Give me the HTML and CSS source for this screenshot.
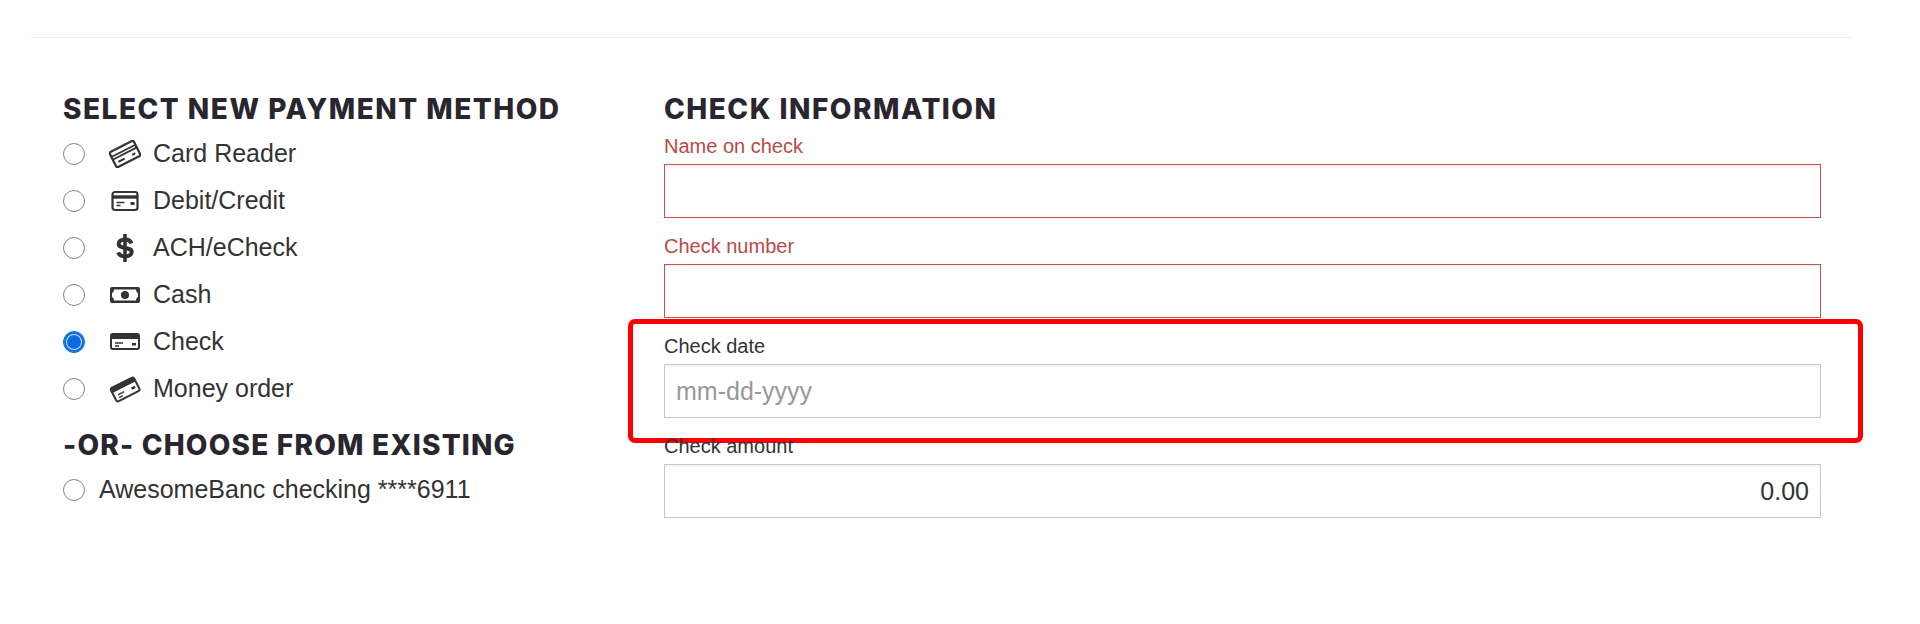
FILE: index.html
```html
<!DOCTYPE html>
<html lang="en">
<head>
  <meta charset="UTF-8">
  <meta name="viewport" content="width=device-width, initial-scale=1.0">
  <title>Payment method</title>
  <link rel="stylesheet" href="styles.css">
</head>
<body>
  <hr class="divider">
  <div class="payment">
    <div class="methods">
      <h2>Select new payment method</h2>
      <label class="method">
        <input type="radio" name="method">
        <svg class="icon" viewBox="0 0 32 28"><g transform="rotate(-27 16 14)" fill="none" stroke="#333" stroke-width="2.200"><rect x="2.500" y="5.500" width="27" height="17" rx="2"/><path d="M3 10.500h26M3 13.500h26" stroke-width="1.800"/><path d="M6.500 18h7M22 18h3.500" stroke-width="2"/></g></svg>
        <span>Card Reader</span>
      </label>
      <label class="method">
        <input type="radio" name="method">
        <svg class="icon" viewBox="0 0 32 28"><rect x="3.500" y="5" width="25" height="18" rx="2.500" fill="none" stroke="#333" stroke-width="2.200"/><path d="M4 10h24" stroke="#333" stroke-width="3.400"/><path d="M7.500 15.500h8M7.500 18.500h4" stroke="#333" stroke-width="1.600"/><path d="M21.500 15h4v3h-4z" fill="#333"/></svg>
        <span>Debit/Credit</span>
      </label>
      <label class="method">
        <input type="radio" name="method">
        <svg class="icon" viewBox="0 0 32 28"><path d="M22.500 9.500c-.8-2.400-3.300-4-6.500-4-3.800 0-6.300 1.800-6.300 4.400 0 5.600 13 2.600 13 8 0 2.700-2.800 4.400-6.700 4.400-3.400 0-5.900-1.400-6.800-4" fill="none" stroke="#333" stroke-width="4"/><path d="M16 0v28" stroke="#333" stroke-width="3.600"/></svg>
        <span>ACH/eCheck</span>
      </label>
      <label class="method">
        <input type="radio" name="method">
        <svg class="icon" viewBox="0 0 32 28"><rect x="1" y="6" width="30" height="16" rx="2" fill="#333"/><path d="M5 8.500h22q0 3 2 3.500v4q-2 .5-2 3.500H5q0-3-2-3.500v-4q2-.5 2-3.500z" fill="#fff"/><circle cx="16" cy="14" r="4" fill="#333"/></svg>
        <span>Cash</span>
      </label>
      <label class="method">
        <input type="radio" name="method" checked>
        <svg class="icon" viewBox="0 0 32 28"><rect x="2" y="6" width="28" height="15" rx="2" fill="none" stroke="#333" stroke-width="2"/><rect x="2" y="6" width="28" height="5" fill="#333"/><path d="M6 15h8M6 18h4" stroke="#333" stroke-width="1.400"/><path d="M23 15h4v2.500h-4z" fill="#333"/></svg>
        <span>Check</span>
      </label>
      <label class="method">
        <input type="radio" name="method">
        <svg class="icon" viewBox="0 0 32 28"><g transform="rotate(-27 16 14)"><rect x="3" y="7" width="26" height="15" rx="2" fill="none" stroke="#333" stroke-width="2"/><rect x="3" y="7" width="26" height="5" fill="#333"/><path d="M7 16h7M7 19h4" stroke="#333" stroke-width="1.400"/><path d="M22 15.500h4v2.500h-4z" fill="#333"/></g></svg>
        <span>Money order</span>
      </label>
      <h2 class="existing">-or- choose from existing</h2>
      <label class="method saved">
        <input type="radio" name="method">
        <span>AwesomeBanc checking ****6911</span>
      </label>
    </div>

    <div class="check-info">
      <h2>Check information</h2>
      <div class="field error">
        <label for="checkName">Name on check</label>
        <input type="text" id="checkName">
      </div>
      <div class="field error">
        <label for="checkNumber">Check number</label>
        <input type="text" id="checkNumber">
      </div>
      <div class="field highlighted">
        <label for="checkDate">Check date</label>
        <input type="text" id="checkDate" placeholder="mm-dd-yyyy">
        <div class="callout"></div>
      </div>
      <div class="field">
        <label for="checkAmount">Check amount</label>
        <input type="text" id="checkAmount" class="amount" value="0.00">
      </div>
    </div>
  </div>
</body>
</html>
```

FILE: styles.css
```css
body {
  margin: 0;
  padding: 37px 67px 0 31px;
  font-family: "Liberation Sans", Arial, sans-serif;
  color: #333;
  background-color: #fff;
}

.divider {
  margin: 0;
  border: none;
  border-top: 1px solid #eee;
}

.payment {
  display: grid;
  grid-template-columns: 601px 1157px;
  padding: 53px 0 0 32px;
}

h2 {
  margin: 0;
  font-family: Inter, "Liberation Sans", sans-serif;
  font-size: 28px;
  font-weight: 800;
  line-height: 36px;
  letter-spacing: 1.5px;
  text-transform: uppercase;
  color: #2a2630;
}

.check-info h2 {
  margin-bottom: 7px;
}

.methods h2.existing {
  margin-top: 15px;
  letter-spacing: 1.2px;
}

.method {
  display: flex;
  align-items: center;
  height: 47px;
  font-size: 25px;
}

.method:first-of-type {
  margin-top: 3px;
}

.method input {
  appearance: none;
  flex: none;
  width: 22px;
  height: 22px;
  margin: 0;
  border: 1.5px solid #858585;
  border-radius: 50%;
  background-color: #fff;
}

.method input:checked {
  border-color: #0b6be0;
  background-color: #0b6be0;
  box-shadow: inset 0 0 0 2px #0b6be0, inset 0 0 0 3px #cfe0f7;
}

.icon {
  flex: none;
  width: 32px;
  height: 28px;
  margin: 0 12px 0 24px;
}

.saved {
  margin-top: 3px;
}

.saved span {
  margin-left: 14px;
}

.field {
  position: relative;
  margin-bottom: 16px;
}

.field label {
  display: block;
  height: 25px;
  font-size: 20px;
  line-height: 25px;
}

.field input {
  display: block;
  box-sizing: border-box;
  width: 100%;
  height: 54px;
  margin-top: 5px;
  padding: 0 11px;
  border: 1px solid #c8c8c8;
  box-shadow: inset 0 2px 2px rgba(0, 0, 0, 0.05);
  font-family: inherit;
  font-size: 25px;
  color: #333;
  outline: none;
}

.field input::placeholder {
  color: #999;
}

.field.error label {
  color: #b94a48;
}

.field.error input {
  border-color: #c9504e;
}

.field .amount {
  text-align: right;
}

.callout {
  position: absolute;
  top: -15px;
  left: -36px;
  right: -42px;
  height: 124px;
  box-sizing: border-box;
  border: 5px solid #f00;
  border-radius: 7px;
  pointer-events: none;
}
```
